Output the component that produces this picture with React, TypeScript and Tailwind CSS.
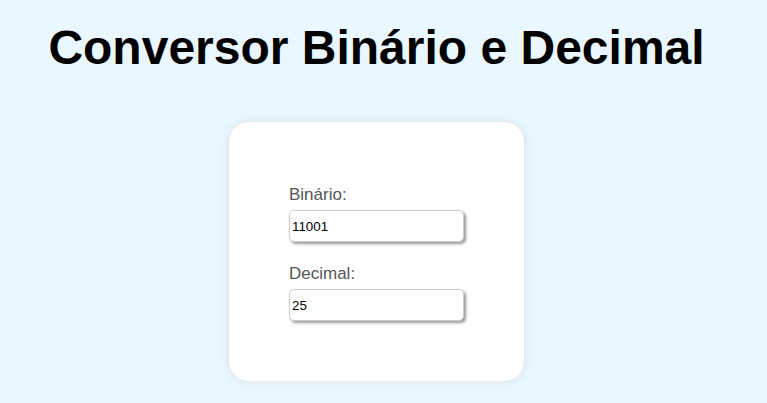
const fields = [
    {id: 'binario', label: 'Binário:', value: '11001'},
    {id: 'decimal', label: 'Decimal:', value: '25'},
];

export default function App() {
    return (
        <main className="flex min-h-[403px] w-full flex-col items-center bg-[#eaf7ff] pr-[14px] font-['Liberation_Sans',Arial,sans-serif]">
            <h1 className="mt-[20px] text-[48px] leading-[55px] font-bold text-black">
                Conversor Binário e Decimal
            </h1>
            <section className="mt-[47px] flex w-[295px] flex-col rounded-[20px] bg-white px-[60px] pt-[64px] pb-[60px] shadow-[0_0_10px_rgba(0,0,0,0.1)]">
                {fields.map((field, i) => (
                    <div
                        key={field.id}
                        className={i > 0 ? 'mt-[23px] flex flex-col' : 'flex flex-col'}
                    >
                        <label
                            htmlFor={field.id}
                            className="text-[17px] leading-[18px] text-[#555]"
                        >
                            {field.label}
                        </label>
                        <input
                            id={field.id}
                            type="text"
                            defaultValue={field.value}
                            className="mt-[6px] h-[32px] w-[175px] rounded-[5px] border border-[#ccc] bg-white px-[2px] text-[13.33px] text-black shadow-[2px_2px_3px_#999] outline-none"
                        />
                    </div>
                ))}
            </section>
        </main>
    );
}
